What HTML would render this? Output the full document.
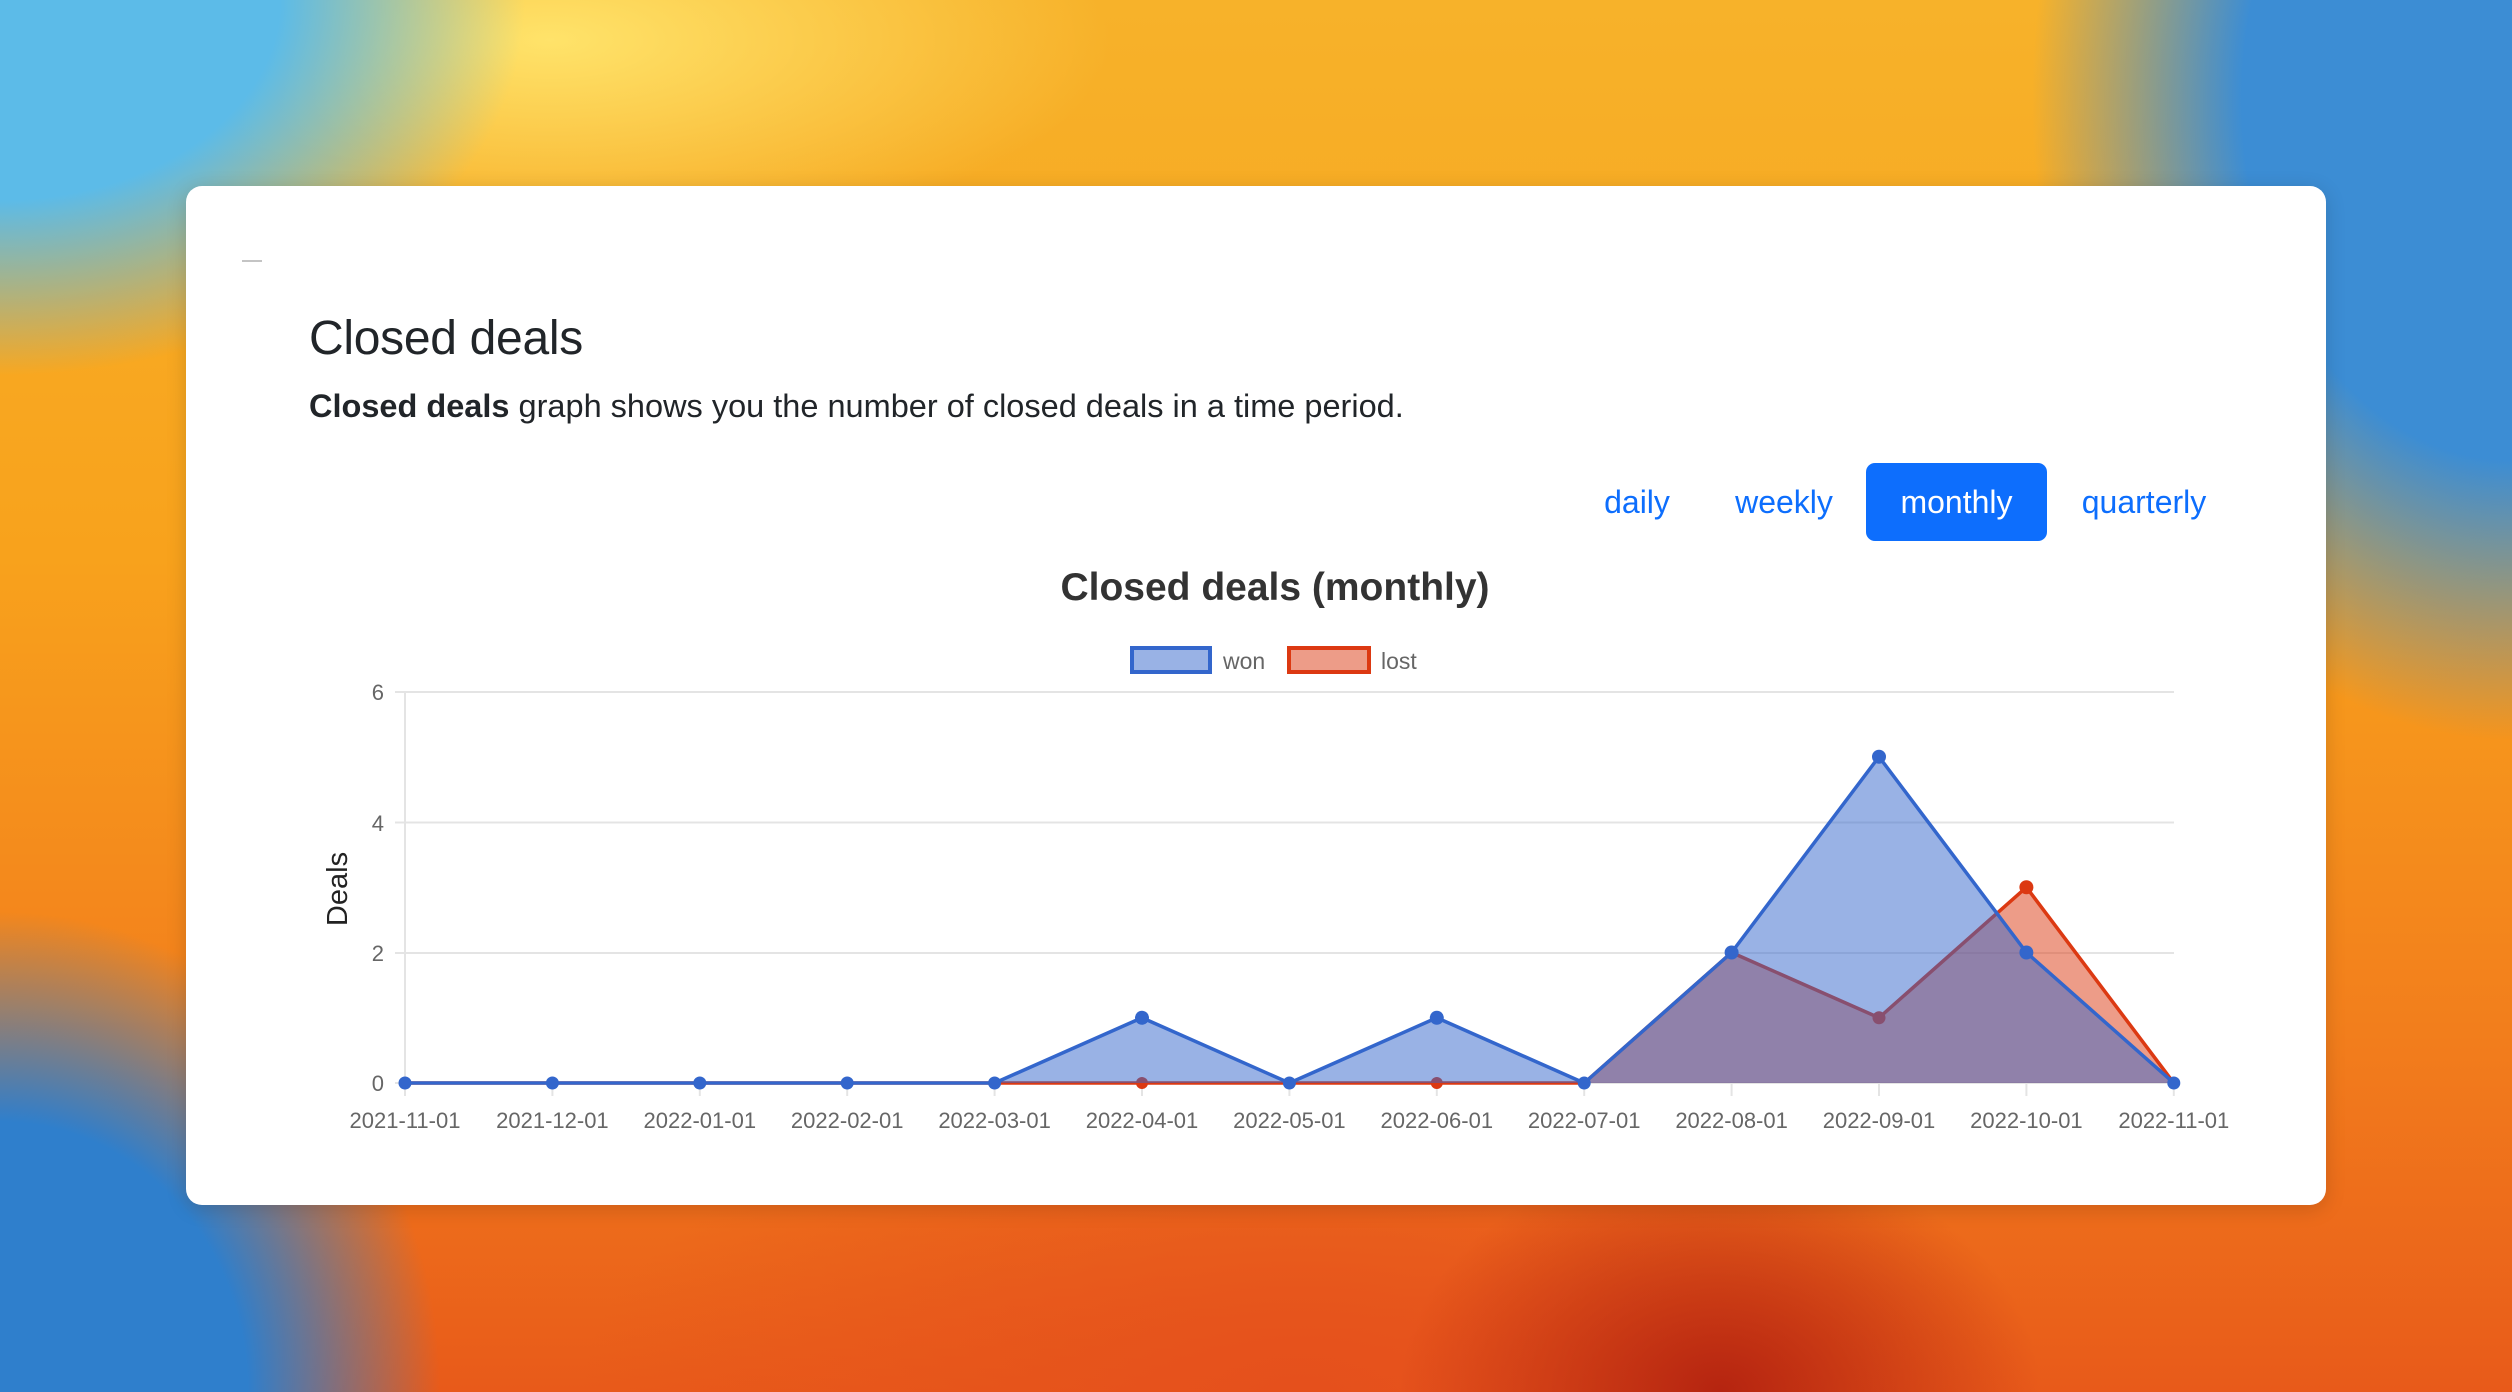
<!DOCTYPE html>
<html><head><meta charset="utf-8">
<style>
html,body{margin:0;padding:0;width:2512px;height:1392px;overflow:hidden;font-family:"Liberation Sans",sans-serif;}
.bg{position:absolute;left:0;top:0;width:2512px;height:1392px;
background:
radial-gradient(ellipse 700px 500px at 0px 0px,#5cbbe8 0%,#5cbbe8 40%,rgba(92,187,232,0) 75%),
radial-gradient(ellipse 600px 800px at 2512px 100px,#3c8dd4 0%,#3c8dd4 45%,rgba(60,141,212,0) 80%),
radial-gradient(ellipse 550px 600px at 0px 1392px,#2f7fcc 0%,#2f7fcc 45%,rgba(47,127,204,0) 80%),
radial-gradient(ellipse 700px 260px at 550px 40px,#ffe36a 0%,rgba(255,220,90,0) 80%),
radial-gradient(ellipse 400px 300px at 1720px 1392px,#b52410 0%,rgba(181,36,16,0) 80%),
radial-gradient(ellipse 900px 400px at 1300px 1392px,#e5501c 0%,rgba(229,80,28,0) 80%),
linear-gradient(180deg,#f7b22a 0%,#f8a21c 40%,#f27d1c 75%,#e85a1a 100%);}
.card{position:absolute;left:186px;top:186px;width:2140px;height:1019px;background:#fff;border-radius:16px;box-shadow:0 4px 20px rgba(0,0,0,0.15);}
.dash{position:absolute;left:242px;top:260px;width:20px;height:2px;background:#c4c4c4;}
h1{position:absolute;left:309px;top:311px;margin:0;font-size:48px;font-weight:400;color:#212529;white-space:nowrap;letter-spacing:-0.3px;}
p{position:absolute;left:309px;top:388px;margin:0;font-size:32.5px;color:#212529;white-space:nowrap;}
.btn{position:absolute;top:463px;height:78px;line-height:78px;font-size:32px;color:#0d6efd;text-align:center;}
.act{background:#0d6efd;color:#fff;border-radius:9px;}
</style></head><body>
<div class="bg"></div>
<div class="card"></div>
<div class="dash"></div>
<h1>Closed deals</h1>
<p><b>Closed deals</b> graph shows you the number of closed deals in a time period.</p>
<div class="btn" style="left:1585px;width:104px;">daily</div>
<div class="btn" style="left:1718px;width:132px;">weekly</div>
<div class="btn act" style="left:1866px;width:181px;">monthly</div>
<div class="btn" style="left:2064px;width:160px;">quarterly</div>
<svg style="position:absolute;left:0;top:0" width="2512" height="1392" font-family="Liberation Sans, sans-serif">
<text x="1275" y="600" text-anchor="middle" font-size="39" font-weight="bold" fill="#333">Closed deals (monthly)</text>
<rect x="1132" y="648" width="78" height="24" fill="rgba(51,102,204,0.5)" stroke="#3366cc" stroke-width="4"/>
<text x="1223" y="669" font-size="23" fill="#666">won</text>
<rect x="1289" y="648" width="80" height="24" fill="rgba(220,57,18,0.5)" stroke="#dc3912" stroke-width="4"/>
<text x="1381" y="669" font-size="23" fill="#666">lost</text>
<g stroke="#e4e4e4" stroke-width="2">
<line x1="395" y1="692" x2="2174" y2="692"/>
<line x1="395" y1="822.5" x2="2174" y2="822.5"/>
<line x1="395" y1="953" x2="2174" y2="953"/>
<line x1="395" y1="1083" x2="2174" y2="1083"/>
<line x1="405" y1="692" x2="405" y2="1096"/>
<line x1="552.4" y1="1083" x2="552.4" y2="1096"/><line x1="699.8" y1="1083" x2="699.8" y2="1096"/><line x1="847.2" y1="1083" x2="847.2" y2="1096"/><line x1="994.6" y1="1083" x2="994.6" y2="1096"/><line x1="1142" y1="1083" x2="1142" y2="1096"/><line x1="1289.4" y1="1083" x2="1289.4" y2="1096"/><line x1="1436.8" y1="1083" x2="1436.8" y2="1096"/><line x1="1584.2" y1="1083" x2="1584.2" y2="1096"/><line x1="1731.6" y1="1083" x2="1731.6" y2="1096"/><line x1="1879" y1="1083" x2="1879" y2="1096"/><line x1="2026.4" y1="1083" x2="2026.4" y2="1096"/><line x1="2173.8" y1="1083" x2="2173.8" y2="1096"/>
</g>
<g font-size="22" fill="#666" text-anchor="end">
<text x="384" y="700">6</text><text x="384" y="831">4</text><text x="384" y="961">2</text><text x="384" y="1091">0</text>
</g>
<text transform="translate(347,889) rotate(-90)" text-anchor="middle" font-size="29" fill="#222">Deals</text>
<g font-size="22" fill="#666" text-anchor="middle">
<text x="405" y="1128">2021-11-01</text><text x="552.4" y="1128">2021-12-01</text><text x="699.8" y="1128">2022-01-01</text><text x="847.2" y="1128">2022-02-01</text><text x="994.6" y="1128">2022-03-01</text><text x="1142" y="1128">2022-04-01</text><text x="1289.4" y="1128">2022-05-01</text><text x="1436.8" y="1128">2022-06-01</text><text x="1584.2" y="1128">2022-07-01</text><text x="1731.6" y="1128">2022-08-01</text><text x="1879" y="1128">2022-09-01</text><text x="2026.4" y="1128">2022-10-01</text><text x="2173.8" y="1128">2022-11-01</text>
</g>
<path d="M405,1083 L1584.2,1083 L1731.6,952.5 L1879,1017.75 L2026.4,887.25 L2173.8,1083 Z" fill="rgba(220,57,18,0.5)"/>
<polyline points="405,1083 1584.2,1083 1731.6,952.5 1879,1017.75 2026.4,887.25 2173.8,1083" fill="none" stroke="#dc3912" stroke-width="3.5" stroke-linejoin="round"/>
<g fill="#dc3912"><circle cx="1142" cy="1083" r="6"/><circle cx="1436.8" cy="1083" r="6"/><circle cx="1879" cy="1017.75" r="6.5"/><circle cx="2026.4" cy="887.25" r="7"/></g>
<path d="M405,1083 L994.6,1083 L1142,1017.75 L1289.4,1083 L1436.8,1017.75 L1584.2,1083 L1731.6,952.5 L1879,756.75 L2026.4,952.5 L2173.8,1083 Z" fill="rgba(51,102,204,0.5)"/>
<polyline points="405,1083 994.6,1083 1142,1017.75 1289.4,1083 1436.8,1017.75 1584.2,1083 1731.6,952.5 1879,756.75 2026.4,952.5 2173.8,1083" fill="none" stroke="#3366cc" stroke-width="3.5" stroke-linejoin="round"/>
<g fill="#3366cc"><circle cx="405" cy="1083" r="6.5"/><circle cx="552.4" cy="1083" r="6.5"/><circle cx="699.8" cy="1083" r="6.5"/><circle cx="847.2" cy="1083" r="6.5"/><circle cx="994.6" cy="1083" r="6.5"/><circle cx="1142" cy="1017.75" r="7"/><circle cx="1289.4" cy="1083" r="6.5"/><circle cx="1436.8" cy="1017.75" r="7"/><circle cx="1584.2" cy="1083" r="6.5"/><circle cx="1731.6" cy="952.5" r="7"/><circle cx="1879" cy="756.75" r="7"/><circle cx="2026.4" cy="952.5" r="7"/><circle cx="2173.8" cy="1083" r="6.5"/></g>
</svg>
</body></html>
